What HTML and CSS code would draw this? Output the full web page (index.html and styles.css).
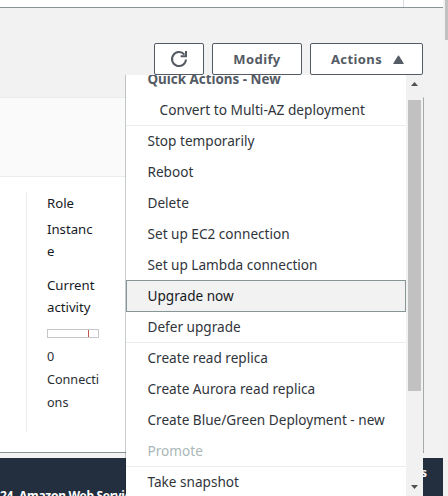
FILE: index.html
```html
<!DOCTYPE html>
<html lang="en">
<head>
<meta charset="utf-8">
<title>Database</title>
<link rel="stylesheet" href="styles.css">
</head>
<body>
<div class="page">
  <main class="content">
    <div class="topbar"><span class="topbar-cell"></span></div>
    <header class="header">
      <button class="btn btn-refresh" aria-label="Refresh">
        <svg width="18" height="18" viewBox="0 0 18 18" fill="none" stroke="#545b64" stroke-width="2"><path d="M16 9.5A7 7 0 1 1 14.4 4.6"/><path d="M16 1v5.2h-5.4"/></svg>
      </button>
      <button class="btn btn-modify">Modify</button>
      <button class="btn btn-actions">Actions<svg width="11" height="9" viewBox="0 0 11 9"><path d="M5.5 0.8 10.3 8.5H.7Z" fill="#545b64" stroke="#545b64" stroke-linejoin="round"/></svg></button>
    </header>
    <section class="panel">
      <div class="panel-head"></div>
      <div class="panel-body">
        <div class="column">
          <div class="label">Role</div>
          <div class="value">Instanc<br>e</div>
          <div class="label activity">Current<br>activity</div>
          <div class="meter"><span class="meter-mark"></span></div>
          <div class="connections">0<br>Connecti<br>ons</div>
        </div>
      </div>
    </section>
    <footer class="footer"><span class="copyright">24, Amazon Web Services, Inc.</span><span class="terms">s</span></footer>
  </main>
  <div class="page-scroll"><div class="page-thumb"></div></div>
  <div class="menu">
    <ul class="items">
      <li class="item heading"><span>Quick Actions - New</span></li>
      <li class="item nested divided"><span>Convert to Multi-AZ deployment</span></li>
      <li class="item"><span>Stop temporarily</span></li>
      <li class="item"><span>Reboot</span></li>
      <li class="item"><span>Delete</span></li>
      <li class="item"><span>Set up EC2 connection</span></li>
      <li class="item"><span>Set up Lambda connection</span></li>
      <li class="item selected"><span>Upgrade now</span></li>
      <li class="item divided"><span>Defer upgrade</span></li>
      <li class="item"><span>Create read replica</span></li>
      <li class="item"><span>Create Aurora read replica</span></li>
      <li class="item"><span>Create Blue/Green Deployment - new</span></li>
      <li class="item disabled divided"><span>Promote</span></li>
      <li class="item"><span>Take snapshot</span></li>
    </ul>
    <div class="menu-scroll">
      <svg width="7" height="4" viewBox="0 0 7 4"><path d="M0 4 3.5 0 7 4Z" fill="#505050"/></svg>
      <div class="menu-thumb"></div>
      <svg class="down" width="7" height="4" viewBox="0 0 7 4"><path d="M0 0 3.5 4 7 0Z" fill="#505050"/></svg>
    </div>
  </div>
</div>
</body>
</html>
```
FILE: styles.css
```css
* { box-sizing: border-box; }
body {
  margin: 0;
  font-family: "Noto Sans", "Open Sans", sans-serif;
  font-size: 14px;
  color: #16191f;
  overflow: hidden;
}
.page {
  position: relative;
  display: flex;
  width: 448px;
  height: 496px;
  overflow: hidden;
  background: #f2f2f2;
}
.content { width: 443px; display: flex; flex-direction: column; }
.topbar {
  height: 8px;
  flex: none;
  background: #fff;
  border-bottom: 1px solid #879596;
  display: flex;
  justify-content: flex-end;
}
.topbar-cell { width: 40px; border-left: 1px solid #d5dbdb; }
.header {
  height: 89px;
  flex: none;
  display: flex;
  justify-content: flex-end;
  gap: 8px;
  padding: 35px 20px 0 0;
}
.btn {
  height: 32px;
  padding: 0;
  border: 1px solid #545b64;
  border-radius: 2px;
  background: #fff;
  color: #545b64;
  font: 700 13px "Noto Sans", sans-serif;
  letter-spacing: 0.4px;
  display: flex;
  align-items: center;
  justify-content: center;
}
.btn-refresh { width: 50px; }
.btn-modify { width: 90px; }
.btn-actions { width: 113px; gap: 11px; padding-left: 2px; }
.panel {
  width: 424px;
  height: 356px;
  flex: none;
  border: 1px solid #d5dbdb;
  border-color: #eaeded #a4a9ab #879596;
  border-left: 0;
  background: #fff;
}
.panel-head { height: 79px; background: #fafafa; border-bottom: 1px solid #eaeded; }
.panel-body { padding: 15px 0 0 26px; }
.column {
  height: 240px;
  border-left: 1px solid #eaeded;
  padding-left: 20px;
  line-height: 22px;
  font-size: 13.2px;
}
.value { padding-top: 4px; }
.activity { padding-top: 12px; }
.meter {
  width: 52px;
  height: 9px;
  margin-top: 11px;
  border: 1px solid #c4c8ca;
  display: flex;
  padding-left: 40px;
}
.meter-mark { width: 1px; flex: none; background: #c0564a; }
.connections { padding-top: 7px; line-height: 23px; font-size: 12.6px; color: #2a2e33; }
.footer {
  margin-top: 5px;
  height: 38px;
  flex: none;
  background: #232f3e;
  color: #fff;
  font-size: 12px;
  font-weight: 700;
  display: flex;
  justify-content: space-between;
  overflow: hidden;
}
.copyright { padding-top: 29px; line-height: 18px; letter-spacing: -0.3px; white-space: nowrap; }
.terms { padding: 6px 16px 0 0; line-height: 18px; }
.page-scroll { width: 5px; background: #f1f1f1; padding-left: 2px; }
.page-thumb { height: 40px; background: #c1c1c1; }
.menu {
  position: absolute;
  left: 126px;
  top: 75px;
  width: 297px;
  height: 421px;
  display: flex;
  overflow: hidden;
  background: #fff;
  box-shadow: -1px 0 0 rgba(0, 28, 36, 0.22);
}
.items { list-style: none; margin: -11px 0 0; padding: 0; width: 280px; flex: none; }
.item {
  height: 31px;
  padding: 0 0 2px 21.5px;
  display: flex;
  align-items: center;
  white-space: nowrap;
  font-size: 13.6px;
  color: #30353b;
  border: 0 solid #eaeded;
}
.heading { font-weight: 700; font-size: 13.4px; color: #545b64; }
.nested { padding-left: 33.5px; font-size: 13.7px; }
.divided { border-bottom-width: 1px; }
.selected {
  height: 32px;
  margin-top: -1px;
  padding-left: 20.5px;
  border: 1px solid #879596;
  background: #f2f2f2;
  color: #16191f;
}
.disabled { color: #aab7b8; }
.menu-scroll {
  width: 17px;
  height: 421px;
  background: #f1f1f1;
  display: flex;
  flex-direction: column;
  align-items: center;
  padding-top: 7px;
}
.menu-scroll svg { flex: none; }
.menu-thumb { width: 13px; height: 291px; margin-top: 14px; background: #c1c1c1; flex: none; }
.down { margin-top: 94px; }
```
